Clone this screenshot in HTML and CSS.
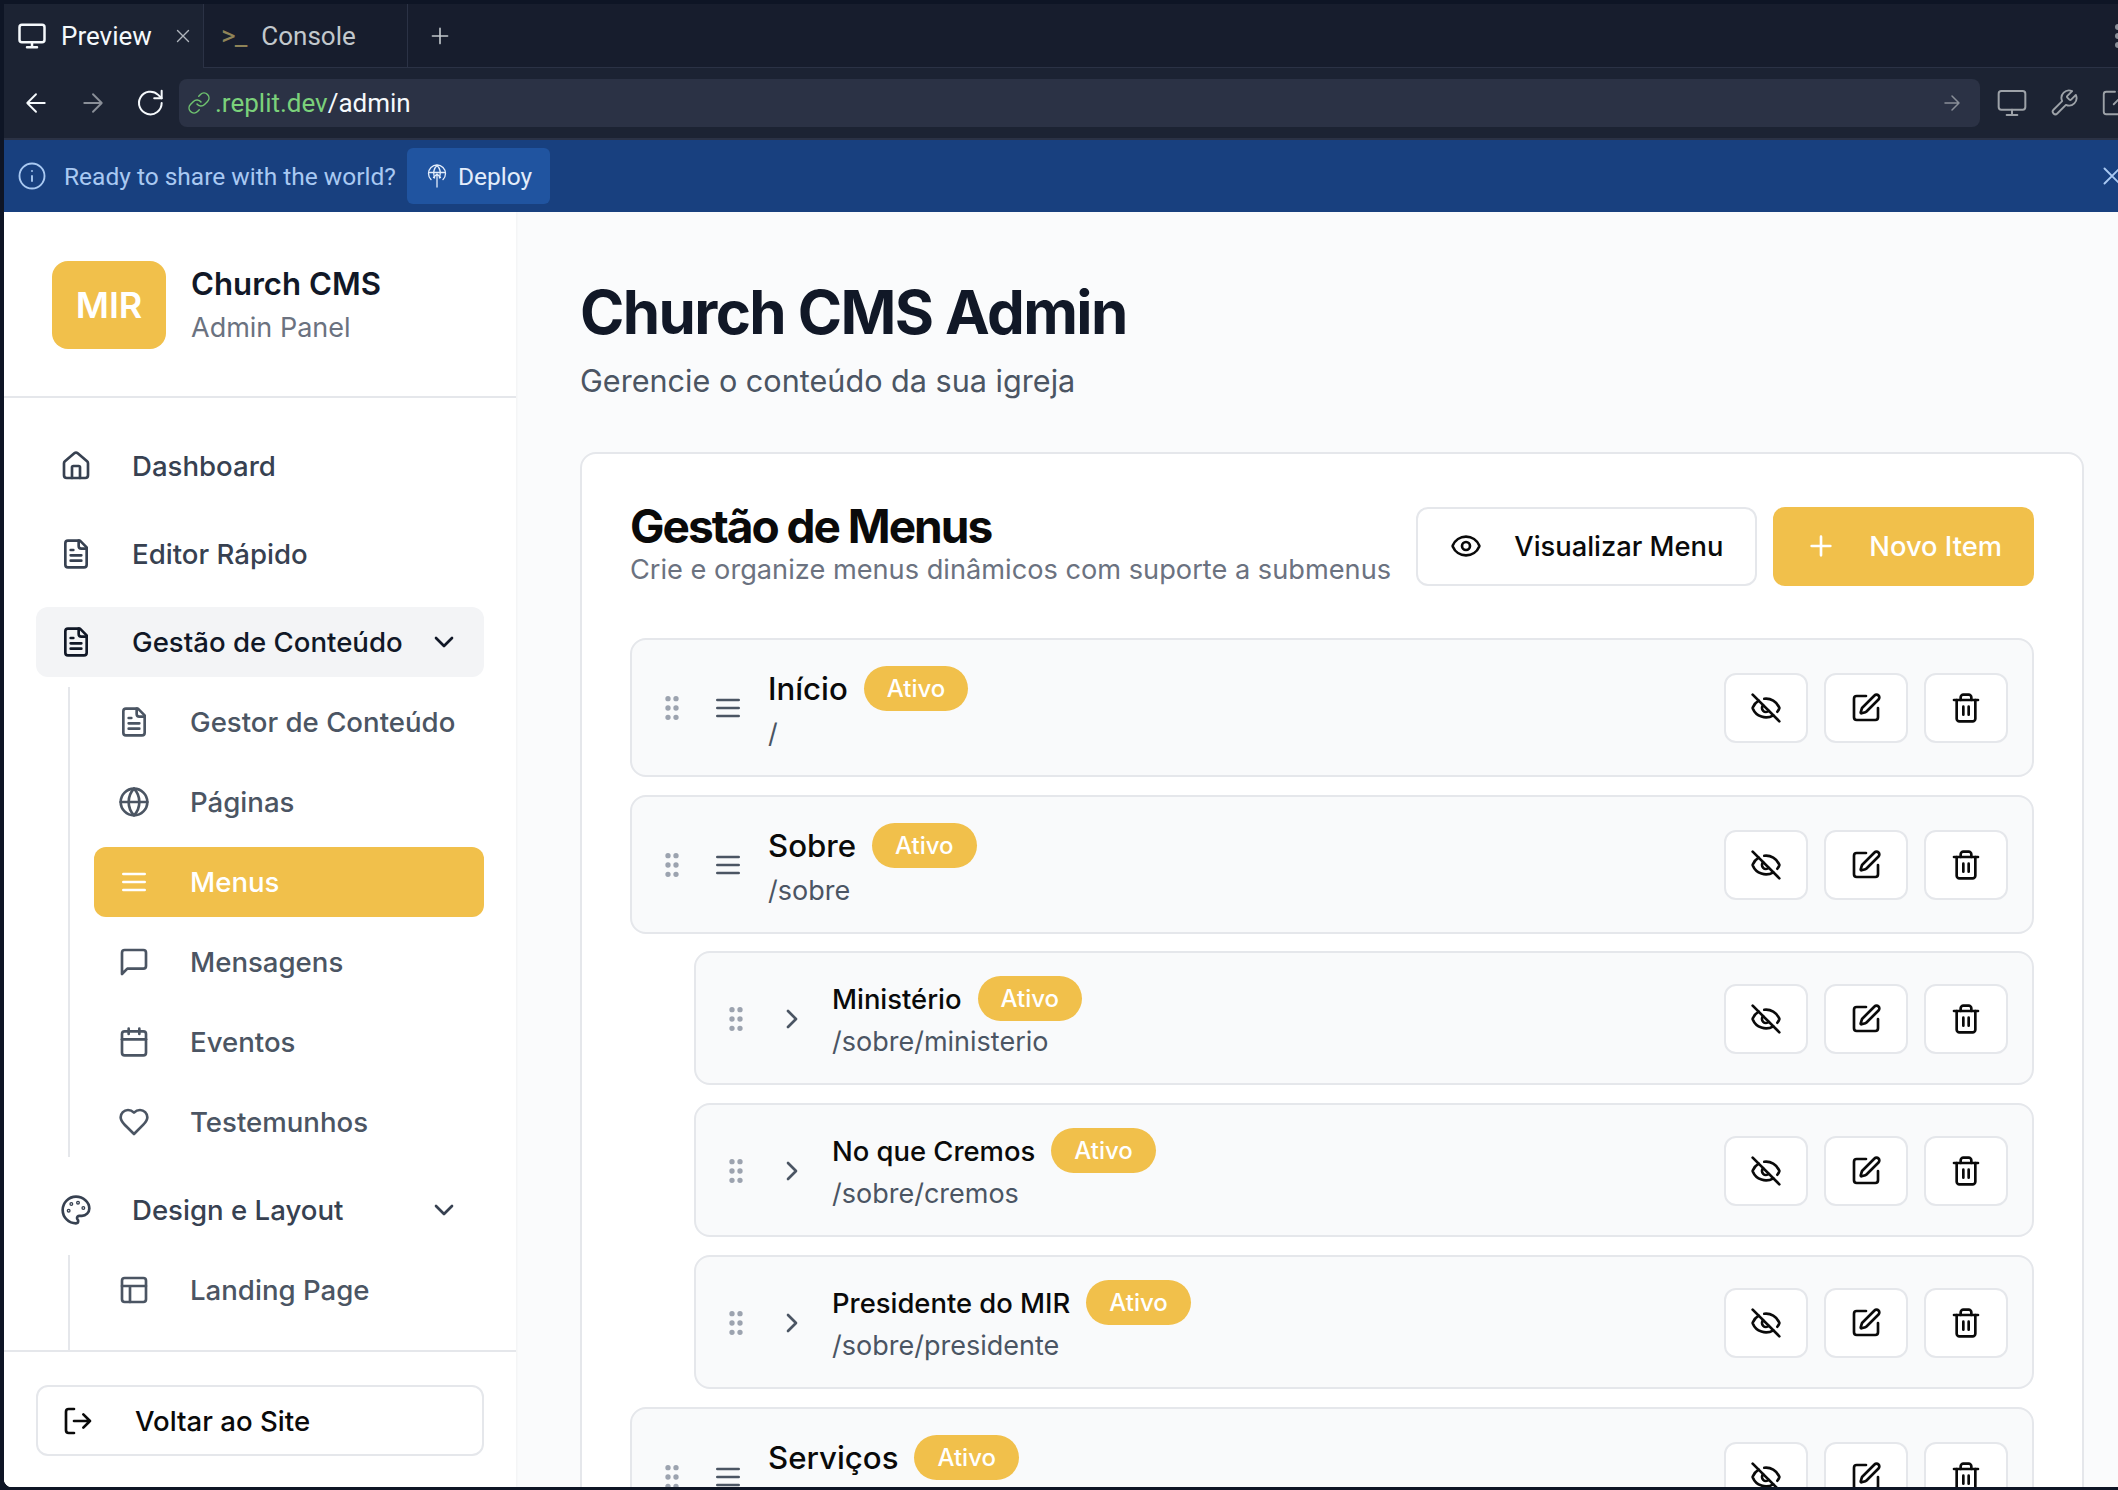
FILE: index.html
```html
<!DOCTYPE html>
<html lang="pt">
<head>
    <meta charset="UTF-8">
    <meta name="viewport" content="width=device-width, initial-scale=1.0">
    <title>Church CMS Admin</title>
    <link rel="stylesheet" href="styles.css">
</head>
<body>

<svg class="sprite" xmlns="http://www.w3.org/2000/svg">
    <symbol id="i-monitor" viewBox="0 0 24 24"><rect x="2" y="3" width="20" height="14" rx="2"/><path d="M8 21h8M12 17v4"/></symbol>
    <symbol id="i-home" viewBox="0 0 24 24"><path d="M15 21v-8a1 1 0 0 0-1-1h-4a1 1 0 0 0-1 1v8"/><path d="M3 10a2 2 0 0 1 .709-1.528l7-5.999a2 2 0 0 1 2.582 0l7 5.999A2 2 0 0 1 21 10v9a2 2 0 0 1-2 2H5a2 2 0 0 1-2-2z"/></symbol>
    <symbol id="i-file" viewBox="0 0 24 24"><path d="M15 2H6a2 2 0 0 0-2 2v16a2 2 0 0 0 2 2h12a2 2 0 0 0 2-2V7Z"/><path d="M14 2v4a2 2 0 0 0 2 2h4"/><path d="M10 9H8M16 13H8M16 17H8"/></symbol>
    <symbol id="i-globe" viewBox="0 0 24 24"><circle cx="12" cy="12" r="10"/><path d="M12 2a14.5 14.5 0 0 0 0 20 14.5 14.5 0 0 0 0-20"/><path d="M2 12h20"/></symbol>
    <symbol id="i-menu" viewBox="0 0 24 24"><path d="M4 6h16M4 12h16M4 18h16"/></symbol>
    <symbol id="i-message" viewBox="0 0 24 24"><path d="M21 15a2 2 0 0 1-2 2H7l-4 4V5a2 2 0 0 1 2-2h14a2 2 0 0 1 2 2z"/></symbol>
    <symbol id="i-calendar" viewBox="0 0 24 24"><path d="M8 2v4M16 2v4"/><rect x="3" y="4" width="18" height="18" rx="2"/><path d="M3 10h18"/></symbol>
    <symbol id="i-heart" viewBox="0 0 24 24"><path d="M19 14c1.49-1.46 3-3.21 3-5.5A5.5 5.5 0 0 0 16.5 3c-1.76 0-3 .5-4.5 2-1.5-1.5-2.74-2-4.5-2A5.5 5.5 0 0 0 2 8.5c0 2.3 1.5 4.05 3 5.5l7 7Z"/></symbol>
    <symbol id="i-palette" viewBox="0 0 24 24"><circle cx="13.5" cy="6.5" r=".5"/><circle cx="17.5" cy="10.5" r=".5"/><circle cx="8.5" cy="7.5" r=".5"/><circle cx="6.5" cy="12.5" r=".5"/><path d="M12 2C6.5 2 2 6.5 2 12s4.5 10 10 10c.926 0 1.648-.746 1.648-1.688 0-.437-.18-.835-.437-1.125-.29-.289-.438-.652-.438-1.125a1.64 1.64 0 0 1 1.668-1.668h1.996c3.051 0 5.555-2.503 5.555-5.554C21.965 6.012 17.461 2 12 2z"/></symbol>
    <symbol id="i-layout" viewBox="0 0 24 24"><rect x="3" y="3" width="18" height="18" rx="2"/><path d="M3 9h18M9 21V9"/></symbol>
    <symbol id="i-logout" viewBox="0 0 24 24"><path d="M9 21H5a2 2 0 0 1-2-2V5a2 2 0 0 1 2-2h4"/><path d="m16 17 5-5-5-5M21 12H9"/></symbol>
    <symbol id="i-chevron-down" viewBox="0 0 24 24"><path d="m6 9 6 6 6-6"/></symbol>
    <symbol id="i-chevron-right" viewBox="0 0 24 24"><path d="m9 18 6-6-6-6"/></symbol>
    <symbol id="i-grip" viewBox="0 0 24 24"><circle cx="9" cy="12" r="1"/><circle cx="9" cy="5" r="1"/><circle cx="9" cy="19" r="1"/><circle cx="15" cy="12" r="1"/><circle cx="15" cy="5" r="1"/><circle cx="15" cy="19" r="1"/></symbol>
    <symbol id="i-eye-off" viewBox="0 0 24 24"><path d="M10.733 5.076a10.744 10.744 0 0 1 11.205 6.575 1 1 0 0 1 0 .696 10.747 10.747 0 0 1-1.444 2.49"/><path d="M14.084 14.158a3 3 0 0 1-4.242-4.242"/><path d="M17.479 17.499a10.75 10.75 0 0 1-15.417-5.151 1 1 0 0 1 0-.696 10.75 10.75 0 0 1 4.446-5.143"/><path d="m2 2 20 20"/></symbol>
    <symbol id="i-eye" viewBox="0 0 24 24"><path d="M2.062 12.348a1 1 0 0 1 0-.696 10.75 10.75 0 0 1 19.876 0 1 1 0 0 1 0 .696 10.75 10.75 0 0 1-19.876 0"/><circle cx="12" cy="12" r="3"/></symbol>
    <symbol id="i-pen" viewBox="0 0 24 24"><path d="M12 3H5a2 2 0 0 0-2 2v14a2 2 0 0 0 2 2h14a2 2 0 0 0 2-2v-7"/><path d="M18.375 2.625a1 1 0 0 1 3 3l-9.013 9.014a2 2 0 0 1-.853.505l-2.873.84a.5.5 0 0 1-.62-.62l.84-2.873a2 2 0 0 1 .506-.852z"/></symbol>
    <symbol id="i-trash" viewBox="0 0 24 24"><path d="M3 6h18"/><path d="M19 6v14c0 1-1 2-2 2H7c-1 0-2-1-2-2V6"/><path d="M8 6V4c0-1 1-2 2-2h4c1 0 2 1 2 2v2"/><path d="M10 11v6M14 11v6"/></symbol>
    <symbol id="i-plus" viewBox="0 0 24 24"><path d="M5 12h14M12 5v14"/></symbol>
    <symbol id="i-x" viewBox="0 0 24 24"><path d="M18 6 6 18M6 6l12 12"/></symbol>
    <symbol id="i-arrow-left" viewBox="0 0 24 24"><path d="m12 19-7-7 7-7M19 12H5"/></symbol>
    <symbol id="i-arrow-right" viewBox="0 0 24 24"><path d="M5 12h14M12 5l7 7-7 7"/></symbol>
    <symbol id="i-reload" viewBox="0 0 24 24"><path d="M20 12a8.5 8.5 0 1 1-2.6-6.1L20 8.4"/><path d="M20 2.8v5.6h-5.6"/></symbol>
    <symbol id="i-link" viewBox="0 0 24 24"><path d="M10 13a5 5 0 0 0 7.54.54l3-3a5 5 0 0 0-7.07-7.07l-1.72 1.71"/><path d="M14 11a5 5 0 0 0-7.54-.54l-3 3a5 5 0 0 0 7.07 7.07l1.71-1.71"/></symbol>
    <symbol id="i-wrench" viewBox="0 0 24 24"><path d="M14.7 6.3a1 1 0 0 0 0 1.4l1.6 1.6a1 1 0 0 0 1.4 0l3.77-3.77a6 6 0 0 1-7.94 7.94l-6.91 6.91a2.12 2.12 0 0 1-3-3l6.91-6.91a6 6 0 0 1 7.94-7.94l-3.76 3.76z"/></symbol>
    <symbol id="i-external" viewBox="0 0 24 24"><path d="M12 3H5a2 2 0 0 0-2 2v14a2 2 0 0 0 2 2h14a2 2 0 0 0 2-2v-7"/><path d="M21 3 11 13M15 3h6v6"/></symbol>
    <symbol id="i-info" viewBox="0 0 24 24"><circle cx="12" cy="12" r="10"/><path d="M12 16v-4M12 8h.01"/></symbol>
    <symbol id="i-deploy" viewBox="0 0 24 24"><path d="M6 15.5a8.5 8.5 0 1 1 12 0"/><path d="M9.6 14C8 9 9 4.2 12 1.5c3 2.7 4 7.5 2.4 12.5"/><path d="M3.6 8.5h16.8"/><path d="M12 23V10M8.5 13.5 12 10l3.5 3.5"/></symbol>
</svg>

<div class="frame">

    <!-- preview tabs -->
    <div class="tabbar">
        <div class="tab tab-active">
            <svg class="icon icon-30"><use href="#i-monitor"/></svg>
            <span>Preview</span>
            <svg class="icon icon-22 tab-close"><use href="#i-x"/></svg>
        </div>
        <div class="tab tab-console">
            <span class="prompt">&gt;_</span>
            <span>Console</span>
        </div>
        <div class="tab-new"><svg class="icon icon-26"><use href="#i-plus"/></svg></div>
        <div class="tab-dots"></div>
    </div>

    <!-- address row -->
    <div class="addressrow">
        <svg class="icon icon-30 nav-arrow"><use href="#i-arrow-left"/></svg>
        <svg class="icon icon-30 nav-arrow nav-off"><use href="#i-arrow-right"/></svg>
        <svg class="icon icon-32 nav-arrow"><use href="#i-reload"/></svg>
        <div class="urlbar">
            <svg class="icon icon-24 url-link"><use href="#i-link"/></svg>
            <span class="url-host">.replit.dev</span><span class="url-path">/admin</span>
            <svg class="icon icon-24 url-go"><use href="#i-arrow-right"/></svg>
        </div>
        <svg class="icon icon-32 tool tool-first"><use href="#i-monitor"/></svg>
        <svg class="icon icon-30 tool"><use href="#i-wrench"/></svg>
        <svg class="icon icon-30 tool"><use href="#i-external"/></svg>
    </div>

    <!-- deploy banner -->
    <div class="banner">
        <svg class="icon icon-30 banner-info"><use href="#i-info"/></svg>
        <span class="banner-text">Ready to share with the world?</span>
        <div class="deploy">
            <svg class="icon icon-24"><use href="#i-deploy"/></svg>
            <span>Deploy</span>
        </div>
        <svg class="icon icon-30 banner-close"><use href="#i-x"/></svg>
    </div>

    <div class="app">

        <aside class="sidebar">
            <div class="brand">
                <div class="brand-logo">MIR</div>
                <div class="brand-text">
                    <div class="brand-name">Church CMS</div>
                    <div class="brand-sub">Admin Panel</div>
                </div>
            </div>

            <nav class="nav">
                <a class="nav-item"><svg class="icon icon-32"><use href="#i-home"/></svg><span>Dashboard</span></a>
                <a class="nav-item"><svg class="icon icon-32"><use href="#i-file"/></svg><span>Editor Rápido</span></a>
                <div class="nav-group">
                    <a class="nav-item nav-open"><svg class="icon icon-32"><use href="#i-file"/></svg><span>Gestão de Conteúdo</span><svg class="icon icon-32 nav-chevron"><use href="#i-chevron-down"/></svg></a>
                    <div class="subnav">
                        <a class="nav-item"><svg class="icon icon-32"><use href="#i-file"/></svg><span>Gestor de Conteúdo</span></a>
                        <a class="nav-item"><svg class="icon icon-32"><use href="#i-globe"/></svg><span>Páginas</span></a>
                        <a class="nav-item nav-active"><svg class="icon icon-32"><use href="#i-menu"/></svg><span>Menus</span></a>
                        <a class="nav-item"><svg class="icon icon-32"><use href="#i-message"/></svg><span>Mensagens</span></a>
                        <a class="nav-item"><svg class="icon icon-32"><use href="#i-calendar"/></svg><span>Eventos</span></a>
                        <a class="nav-item"><svg class="icon icon-32"><use href="#i-heart"/></svg><span>Testemunhos</span></a>
                    </div>
                </div>
                <div class="nav-group nav-group-last">
                    <a class="nav-item"><svg class="icon icon-32"><use href="#i-palette"/></svg><span>Design e Layout</span><svg class="icon icon-32 nav-chevron"><use href="#i-chevron-down"/></svg></a>
                    <div class="subnav">
                        <a class="nav-item"><svg class="icon icon-32"><use href="#i-layout"/></svg><span>Landing Page</span></a>
                    </div>
                </div>
            </nav>

            <div class="sidebar-foot">
                <a class="back-btn"><svg class="icon icon-32"><use href="#i-logout"/></svg><span>Voltar ao Site</span></a>
            </div>
        </aside>

        <main class="main">
            <h1>Church CMS Admin</h1>
            <p class="lead">Gerencie o conteúdo da sua igreja</p>

            <section class="card">
                <div class="card-head">
                    <div class="card-title">
                        <h2>Gestão de Menus</h2>
                        <p>Crie e organize menus dinâmicos com suporte a submenus</p>
                    </div>
                    <button class="btn btn-outline"><svg class="icon icon-32"><use href="#i-eye"/></svg>Visualizar Menu</button>
                    <button class="btn btn-primary"><svg class="icon icon-32"><use href="#i-plus"/></svg>Novo Item</button>
                </div>

                <div class="menu-list">

                    <div class="item">
                        <svg class="icon icon-32 grip"><use href="#i-grip"/></svg>
                        <svg class="icon icon-32 item-icon"><use href="#i-menu"/></svg>
                        <div class="item-body">
                            <div class="item-title"><span>Início</span><span class="badge">Ativo</span></div>
                            <div class="item-path">/</div>
                        </div>
                        <div class="item-actions">
                            <button class="act"><svg class="icon icon-32"><use href="#i-eye-off"/></svg></button>
                            <button class="act"><svg class="icon icon-32"><use href="#i-pen"/></svg></button>
                            <button class="act"><svg class="icon icon-32"><use href="#i-trash"/></svg></button>
                        </div>
                    </div>

                    <div class="item">
                        <svg class="icon icon-32 grip"><use href="#i-grip"/></svg>
                        <svg class="icon icon-32 item-icon"><use href="#i-menu"/></svg>
                        <div class="item-body">
                            <div class="item-title"><span>Sobre</span><span class="badge">Ativo</span></div>
                            <div class="item-path">/sobre</div>
                        </div>
                        <div class="item-actions">
                            <button class="act"><svg class="icon icon-32"><use href="#i-eye-off"/></svg></button>
                            <button class="act"><svg class="icon icon-32"><use href="#i-pen"/></svg></button>
                            <button class="act"><svg class="icon icon-32"><use href="#i-trash"/></svg></button>
                        </div>
                    </div>

                    <div class="item item-child">
                        <svg class="icon icon-32 grip"><use href="#i-grip"/></svg>
                        <svg class="icon icon-32 item-icon"><use href="#i-chevron-right"/></svg>
                        <div class="item-body">
                            <div class="item-title"><span>Ministério</span><span class="badge">Ativo</span></div>
                            <div class="item-path">/sobre/ministerio</div>
                        </div>
                        <div class="item-actions">
                            <button class="act"><svg class="icon icon-32"><use href="#i-eye-off"/></svg></button>
                            <button class="act"><svg class="icon icon-32"><use href="#i-pen"/></svg></button>
                            <button class="act"><svg class="icon icon-32"><use href="#i-trash"/></svg></button>
                        </div>
                    </div>

                    <div class="item item-child">
                        <svg class="icon icon-32 grip"><use href="#i-grip"/></svg>
                        <svg class="icon icon-32 item-icon"><use href="#i-chevron-right"/></svg>
                        <div class="item-body">
                            <div class="item-title"><span>No que Cremos</span><span class="badge">Ativo</span></div>
                            <div class="item-path">/sobre/cremos</div>
                        </div>
                        <div class="item-actions">
                            <button class="act"><svg class="icon icon-32"><use href="#i-eye-off"/></svg></button>
                            <button class="act"><svg class="icon icon-32"><use href="#i-pen"/></svg></button>
                            <button class="act"><svg class="icon icon-32"><use href="#i-trash"/></svg></button>
                        </div>
                    </div>

                    <div class="item item-child">
                        <svg class="icon icon-32 grip"><use href="#i-grip"/></svg>
                        <svg class="icon icon-32 item-icon"><use href="#i-chevron-right"/></svg>
                        <div class="item-body">
                            <div class="item-title"><span>Presidente do MIR</span><span class="badge">Ativo</span></div>
                            <div class="item-path">/sobre/presidente</div>
                        </div>
                        <div class="item-actions">
                            <button class="act"><svg class="icon icon-32"><use href="#i-eye-off"/></svg></button>
                            <button class="act"><svg class="icon icon-32"><use href="#i-pen"/></svg></button>
                            <button class="act"><svg class="icon icon-32"><use href="#i-trash"/></svg></button>
                        </div>
                    </div>

                    <div class="item">
                        <svg class="icon icon-32 grip"><use href="#i-grip"/></svg>
                        <svg class="icon icon-32 item-icon"><use href="#i-menu"/></svg>
                        <div class="item-body">
                            <div class="item-title"><span>Serviços</span><span class="badge">Ativo</span></div>
                            <div class="item-path"></div>
                        </div>
                        <div class="item-actions">
                            <button class="act"><svg class="icon icon-32"><use href="#i-eye-off"/></svg></button>
                            <button class="act"><svg class="icon icon-32"><use href="#i-pen"/></svg></button>
                            <button class="act"><svg class="icon icon-32"><use href="#i-trash"/></svg></button>
                        </div>
                    </div>

                </div>
            </section>
        </main>
    </div>
</div>

</body>
</html>
```

FILE: styles.css
```css
* {
    box-sizing: border-box;
}

body {
    margin: 0;
    background-color: #0e1525;
    font-family: Inter, "Noto Sans", sans-serif;
    overflow: hidden;
}

.sprite {
    display: none;
}

.frame {
    width: 2118px;
    height: 1490px;
    padding: 4px 0 3px 4px;
    display: flex;
    flex-direction: column;
    overflow: hidden;
}

/* icons */
.icon {
    flex: none;
    fill: none;
    stroke: currentColor;
    stroke-width: 2;
    stroke-linecap: round;
    stroke-linejoin: round;
}

.icon-22 { width: 22px; height: 22px; }
.icon-24 { width: 24px; height: 24px; }
.icon-26 { width: 26px; height: 26px; }
.icon-30 { width: 30px; height: 30px; }
.icon-32 { width: 32px; height: 32px; }

/* browser chrome */
.tabbar {
    height: 64px;
    flex: none;
    display: flex;
    background-color: #171d2d;
    font-family: Roboto, sans-serif;
    font-size: 26px;
    color: #c2c8cc;
    position: relative;
}

.tab {
    width: 204px;
    display: flex;
    align-items: center;
    border-right: 1px solid #2b3245;
    border-bottom: 1px solid #2b3245;
}

.tab-active {
    width: 200px;
    padding-left: 13px;
    gap: 14px;
    background-color: #1c2333;
    color: #f5f9fc;
    border-bottom: none;
}

.tab-close {
    margin-left: 6px;
    color: #b0b5bd;
    stroke-width: 1.5;
}

.tab-console {
    padding-left: 17px;
    gap: 15px;
}

.prompt {
    color: #8f8458;
    font-size: 28px;
    letter-spacing: -1px;
}

.tab-new {
    flex: 1;
    display: flex;
    align-items: center;
    padding-left: 19px;
    border-bottom: 1px solid #2b3245;
}

.tab-new .icon {
    stroke-width: 1.5;
}

.tab-dots {
    position: absolute;
    right: -3px;
    top: 20px;
    width: 6px;
    height: 6px;
    border-radius: 50%;
    background-color: #8a8f98;
    box-shadow: 0 9px 0 #8a8f98, 0 18px 0 #8a8f98;
}

.addressrow {
    height: 72px;
    flex: none;
    display: flex;
    align-items: center;
    padding: 0 0 1px 17px;
    background-color: #1c2333;
    border-bottom: 2px solid #2b3245;
    color: #f5f9fc;
}

.nav-arrow {
    margin-right: 27px;
    stroke-width: 1.5;
}

.nav-off {
    color: #8a8f98;
}

.urlbar {
    width: 1801px;
    height: 48px;
    margin-left: -15px;
    padding: 0 16px 0 8px;
    display: flex;
    align-items: center;
    border-radius: 8px;
    background-color: #2b3245;
    font-family: Roboto, sans-serif;
    font-size: 26px;
    flex: none;
}

.url-link {
    margin-right: 4px;
    color: #6fc26f;
    stroke-width: 1.5;
}

.url-host {
    color: #7bd17b;
}

.url-go {
    margin-left: auto;
    color: #8a8f98;
    stroke-width: 1.5;
}

.tool {
    margin-left: 21px;
    color: #9da2a8;
    stroke-width: 1.5;
}

.tool-first {
    margin-left: 16px;
}

.banner {
    height: 72px;
    flex: none;
    display: flex;
    align-items: center;
    padding-left: 13px;
    background-color: #18407f;
    font-family: Roboto, sans-serif;
    font-size: 24.5px;
    color: #a9c9f2;
    position: relative;
}

.banner-info {
    stroke-width: 1.5;
}

.banner-text {
    margin-left: 17px;
}

.deploy {
    height: 56px;
    margin-left: 11px;
    padding: 0 18px;
    display: flex;
    align-items: center;
    gap: 9px;
    border-radius: 6px;
    background-color: #2054a0;
    color: #e3edfb;
}

.deploy .icon {
    stroke-width: 1.3;
}

.banner-close {
    position: absolute;
    right: -9px;
    top: 21px;
    stroke-width: 1.5;
}

/* app */
.app {
    flex: 1;
    min-height: 0;
    display: flex;
    background-color: #fafbfc;
    border-bottom-left-radius: 8px;
    overflow: hidden;
}

.sidebar {
    width: 512px;
    flex: none;
    display: flex;
    flex-direction: column;
    background-color: #fff;
    box-shadow: 1px 0 2px rgba(0, 0, 0, 0.04);
}

.brand {
    height: 186px;
    flex: none;
    display: flex;
    align-items: center;
    gap: 25px;
    padding: 1px 48px 0;
    border-bottom: 2px solid #e5e7eb;
}

.brand-logo {
    width: 114px;
    height: 88px;
    display: flex;
    align-items: center;
    justify-content: center;
    border-radius: 16px;
    background-color: #f1c04b;
    color: #fff;
    font-size: 36px;
    font-weight: 600;
}

.brand-text {
    white-space: nowrap;
}

.brand-name {
    font-size: 31.2px;
    font-weight: 600;
    line-height: 44px;
    color: #111827;
}

.brand-sub {
    margin-top: 2px;
    font-size: 27px;
    line-height: 40px;
    color: #6b7280;
}

.nav {
    flex: 1;
    min-height: 0;
    padding: 33px 32px 0;
    display: flex;
    flex-direction: column;
    gap: 18px;
    overflow: hidden;
}

.nav-group {
    display: flex;
    flex-direction: column;
}

.nav-group-last {
    flex: 1;
}

.nav-group-last .subnav {
    flex: 1;
}

.nav-item {
    height: 70px;
    flex: none;
    display: flex;
    align-items: center;
    padding: 0 24px;
    border-radius: 12px;
    font-size: 27.6px;
    font-weight: 500;
    color: #374151;
    white-space: nowrap;
}

.nav-item span {
    margin-left: 40px;
}

.nav-open {
    background-color: #f3f4f6;
    color: #111827;
}

.nav-chevron {
    margin-left: auto;
}

.subnav {
    margin: 10px 0 0 32px;
    padding-left: 24px;
    border-left: 2px solid #e5e7eb;
    display: flex;
    flex-direction: column;
    gap: 10px;
}

.subnav .nav-item {
    color: #4b5563;
}

.subnav .nav-active {
    background-color: #f1c04b;
    color: #fff;
}

.sidebar-foot {
    flex: none;
    height: 137px;
    padding: 33px 32px 0;
    border-top: 2px solid #e5e7eb;
    background-color: #fff;
}

.back-btn {
    height: 71px;
    display: flex;
    align-items: center;
    gap: 41px;
    padding: 0 24px;
    border: 2px solid #e5e7eb;
    border-radius: 12px;
    font-size: 27.6px;
    font-weight: 500;
    color: #0a0a0a;
}

/* main */
.main {
    flex: 1;
    min-width: 0;
    padding: 64px 34px 0 64px;
}

h1 {
    margin: 0;
    font-size: 60px;
    line-height: 72px;
    font-weight: 700;
    letter-spacing: -1.6px;
    color: #111827;
}

.lead {
    margin: 9px 0 0;
    font-size: 30.6px;
    line-height: 48px;
    color: #4b5563;
}

.card {
    margin-top: 47px;
    padding: 48px;
    background-color: #fff;
    border: 2px solid #e5e7eb;
    border-radius: 16px;
}

.card-head {
    display: flex;
    align-items: center;
    gap: 16px;
    margin-bottom: 48px;
}

.card-title {
    flex: 1;
    white-space: nowrap;
}

h2 {
    margin: 0;
    font-size: 46px;
    line-height: 48px;
    font-weight: 700;
    letter-spacing: -2px;
    color: #0a0a0a;
}

.card-title p {
    margin: 0;
    font-size: 27.2px;
    line-height: 40px;
    color: #6b7280;
}

.btn {
    height: 79px;
    display: flex;
    align-items: center;
    gap: 32px;
    padding: 0 32px;
    border-radius: 12px;
    font-family: inherit;
    font-size: 27.3px;
    font-weight: 500;
}

.btn-outline {
    background-color: #fff;
    border: 2px solid #e5e7eb;
    color: #0a0a0a;
}

.btn-primary {
    background-color: #f1c04b;
    border: none;
    color: #fff;
}

.menu-list {
    display: flex;
    flex-direction: column;
    gap: 18px;
}

.item {
    flex: none;
    display: flex;
    align-items: center;
    padding: 24px;
    background-color: #f9fafb;
    border: 2px solid #e5e7eb;
    border-radius: 16px;
}

.item-child {
    margin-left: 64px;
    padding-top: 23px;
    padding-bottom: 22px;
}

.item:not(.item-child) + .item-child {
    margin-top: -1px;
}

.grip {
    fill: #9ca3af;
    color: #9ca3af;
}

.item-icon {
    margin-left: 24px;
    color: #4b5563;
}

.item-body {
    flex: 1;
    margin-left: 24px;
}

.item-title {
    min-height: 47px;
    margin-top: 1px;
    display: flex;
    align-items: center;
    gap: 16px;
    font-size: 31.2px;
    font-weight: 500;
    color: #0a0a0a;
}

.item-child .item-title {
    min-height: 45px;
    margin-top: 0;
    font-size: 27.4px;
}

.badge {
    height: 45px;
    display: flex;
    align-items: center;
    padding: 0 23px;
    border-radius: 23px;
    background-color: #f1c04b;
    color: #fff;
    font-size: 24px;
    font-weight: 500;
}

.item-path {
    min-height: 40px;
    margin: 2px 0 -3px;
    font-size: 27px;
    line-height: 40px;
    color: #4b5563;
}

.item-child .item-path {
    margin: 1px 0 -1px;
}

.item-actions {
    display: flex;
    gap: 16px;
}

.act {
    width: 84px;
    height: 70px;
    display: flex;
    align-items: center;
    justify-content: center;
    padding: 0;
    background-color: #fff;
    border: 2px solid #e5e7eb;
    border-radius: 12px;
    color: #0a0a0a;
}
```
